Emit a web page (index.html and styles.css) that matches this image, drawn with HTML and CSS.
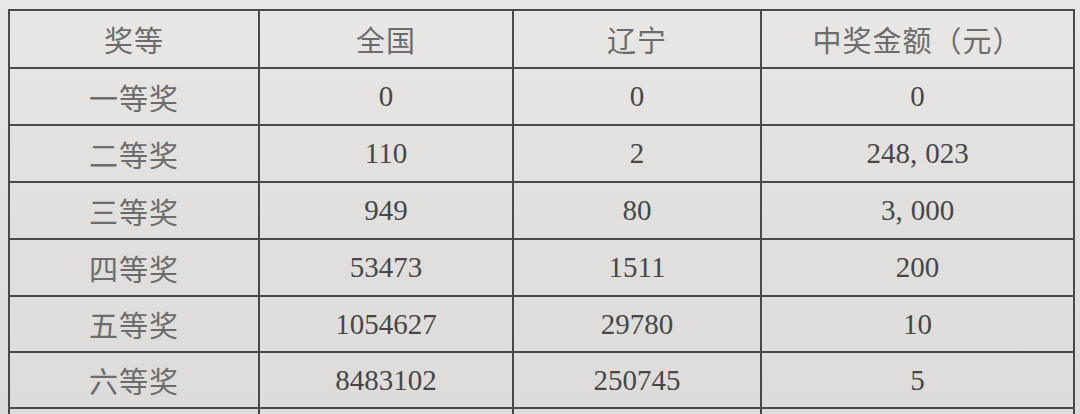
FILE: index.html
```html
<!DOCTYPE html>
<html lang="zh-CN">
<head>
<meta charset="utf-8">
<title>中奖情况</title>
<link rel="stylesheet" href="styles.css">
</head>
<body>
<div class="sheet">
<table class="prize">
  <colgroup>
    <col class="c1"><col class="c2"><col class="c3"><col class="c4">
  </colgroup>
  <thead>
    <tr class="h"><th>奖等</th><th>全国</th><th>辽宁</th><th>中奖金额（元）</th></tr>
  </thead>
  <tbody>
    <tr class="r57"><td class="cn">一等奖</td><td class="num">0</td><td class="num">0</td><td class="num">0</td></tr>
    <tr class="r57"><td class="cn">二等奖</td><td class="num">110</td><td class="num">2</td><td class="num">248,<span class="sp"></span>023</td></tr>
    <tr class="r57"><td class="cn">三等奖</td><td class="num">949</td><td class="num">80</td><td class="num">3,<span class="sp"></span>000</td></tr>
    <tr class="r57"><td class="cn">四等奖</td><td class="num">53473</td><td class="num">1511</td><td class="num">200</td></tr>
    <tr class="r56"><td class="cn">五等奖</td><td class="num">1054627</td><td class="num">29780</td><td class="num">10</td></tr>
    <tr class="r56"><td class="cn">六等奖</td><td class="num">8483102</td><td class="num">250745</td><td class="num">5</td></tr>
    <tr class="tail"><td></td><td></td><td></td><td></td></tr>
  </tbody>
</table>
</div>
</body>
</html>
```

FILE: styles.css
```css
html, body {
  margin: 0;
  padding: 0;
  width: 1080px;
  height: 414px;
  overflow: hidden;
}
body {
  background: linear-gradient(180deg, #e9e8e6 0%, #e2e1df 40%, #dddcda 100%);
}
.sheet {
  padding: 9px 7px 0 8px;
}
.prize {
  border-collapse: collapse;
  width: 1065px;
  table-layout: fixed;
  color: #5f5f5f;
}
.c1 { width: 250px; }
.c2 { width: 254px; }
.c3 { width: 248px; }
.c4 { width: 313px; }
.prize th, .prize td {
  border: 2px solid #4a4a4a;
  text-align: center;
  vertical-align: middle;
  padding: 0;
}
.prize th {
  font-family: "Noto Sans CJK SC", sans-serif;
  font-weight: 400;
  font-size: 29px;
  color: #6c6c6c;
  letter-spacing: 1px;
}
.h { height: 58px; }
.r57 { height: 57px; }
.r56 { height: 56px; }
.tail { height: 6px; }
.prize .tail td {
  border-bottom: none;
}
.cn {
  font-family: "Noto Sans CJK SC", sans-serif;
  font-size: 29px;
  color: #6c6c6c;
  letter-spacing: 1px;
}
.num {
  font-family: "Liberation Serif", serif;
  font-size: 29px;
  color: #474747;
}
.sp {
  display: inline-block;
  width: 8px;
}
```
